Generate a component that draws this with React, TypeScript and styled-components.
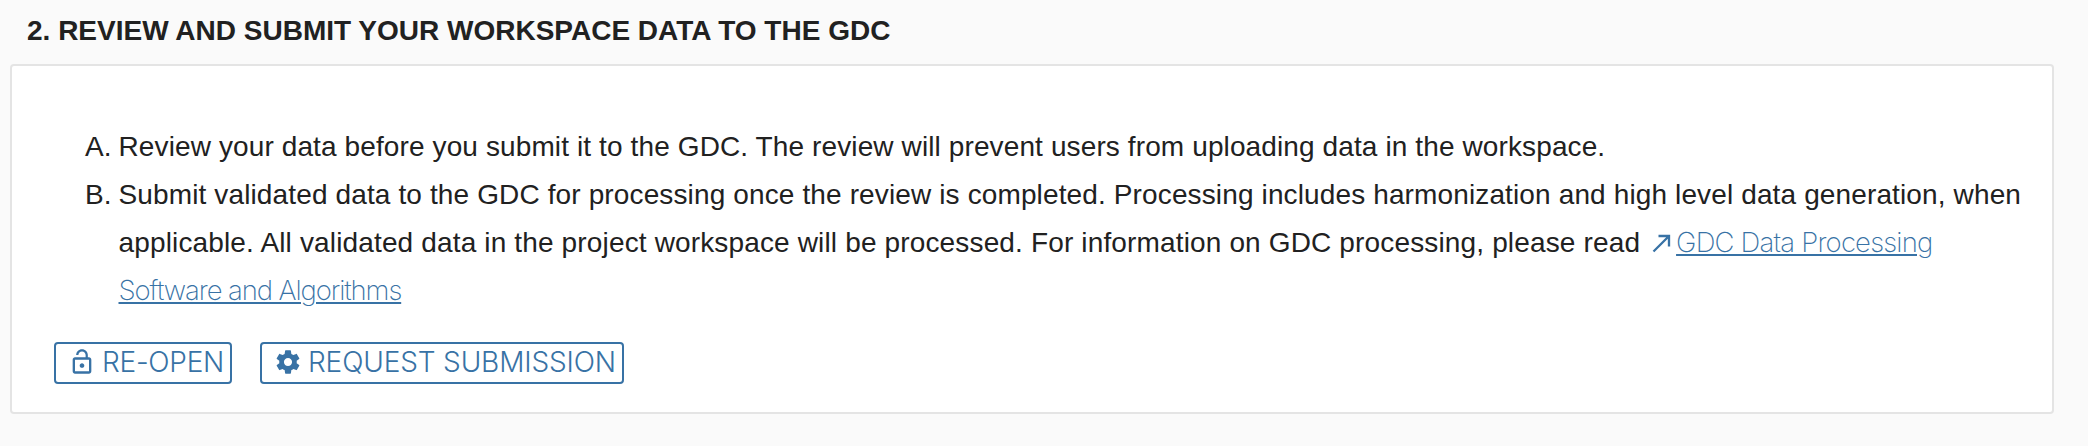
import React from "react";
import styled, { createGlobalStyle } from "styled-components";

const blue = "#3872a5";

const Global = createGlobalStyle`
  * { box-sizing: border-box; }
  body { margin: 0; background: #fafafa; font-family: "Liberation Sans", Arial, sans-serif; color: #212121; }
`;
const Page = styled.main`
  height: 446px;
  padding: 13px 34px 0 10px;
`;
const Heading = styled.h2`
  margin: 0 0 16px 17px;
  font-size: 28px;
  line-height: 35px;
  font-weight: 700;
  white-space: nowrap;
`;
const Panel = styled.section`
  height: 350px;
  background: #fff;
  border: 2px solid #e4e4e4;
  border-radius: 4px;
  padding: 56.5px 0 0 42px;
`;
const Steps = styled.div`
  padding-left: 31px;
  font-size: 28px;
  line-height: 48px;
`;
const Step = styled.div`
  display: grid;
  grid-template-columns: 33.5px 1fr;
`;
const Marker = styled.span<{ $gap: number }>`
  display: block;
  text-align: right;
  padding-right: ${(p) => p.$gap}px;
  white-space: nowrap;
`;
const Line = styled.div<{ $tracking?: number }>`
  height: 48px;
  white-space: nowrap;
  letter-spacing: ${(p) => p.$tracking ?? 0}px;
`;
const Link = styled.a<{ $tracking: number }>`
  color: ${blue};
  font-family: Inter, "Liberation Sans", sans-serif;
  font-size: 27.5px;
  font-weight: 250;
  line-height: 1;
  letter-spacing: ${(p) => p.$tracking}px;
  text-decoration: underline;
  text-decoration-thickness: 2px;
  text-underline-offset: 2px;
`;
const Icon = styled.svg`
  width: 28px;
  height: 28px;
  flex: none;
  fill: ${blue};
`;
const LinkIcon = styled(Icon)`
  vertical-align: -5.5px;
`;
const Actions = styled.div`
  display: flex;
  gap: 28px;
  margin-top: 27.5px;
`;
const Button = styled.button<{ $width: number; $tracking: number }>`
  display: flex;
  align-items: center;
  gap: 6px;
  width: ${(p) => p.$width}px;
  height: 42px;
  padding: 0 0 2px 12px;
  border: 2px solid ${blue};
  border-radius: 4px;
  background: #fff;
  color: ${blue};
  font-family: Inter, "Liberation Sans", sans-serif;
  font-size: 28px;
  font-weight: 300;
  line-height: 34px;
  font-feature-settings: "calt" 0;
  letter-spacing: ${(p) => p.$tracking}px;
  white-space: nowrap;
`;

const LockOpen = () => (
  <Icon viewBox="0 0 24 24" aria-hidden>
    <path d="M12 17c1.1 0 2-.9 2-2s-.9-2-2-2-2 .9-2 2 .9 2 2 2zm6-9h-1V6c0-2.76-2.24-5-5-5S7 3.24 7 6h1.9c0-1.71 1.39-3.1 3.1-3.1 1.71 0 3.1 1.39 3.1 3.1v2H6c-1.1 0-2 .9-2 2v10c0 1.1.9 2 2 2h12c1.1 0 2-.9 2-2V10c0-1.1-.9-2-2-2zm0 12H6V10h12v10z" />
  </Icon>
);
const Gear = () => (
  <Icon viewBox="0 0 24 24" aria-hidden>
    <path d="M19.43 12.98c.04-.32.07-.64.07-.98s-.03-.66-.07-.98l2.11-1.65c.19-.15.24-.42.12-.64l-2-3.46c-.12-.22-.39-.3-.61-.22l-2.49 1c-.52-.4-1.08-.73-1.69-.98l-.38-2.65C14.46 2.18 14.25 2 14 2h-4c-.25 0-.46.18-.49.42l-.38 2.65c-.61.25-1.17.59-1.69.98l-2.49-1c-.23-.09-.49 0-.61.22l-2 3.46c-.13.22-.07.49.12.64l2.11 1.65c-.04.32-.07.65-.07.98s.03.66.07.98l-2.11 1.65c-.19.15-.24.42-.12.64l2 3.46c.12.22.39.3.61.22l2.49-1c.52.4 1.08.73 1.69.98l.38 2.65c.03.24.24.42.49.42h4c.25 0 .46-.18.49-.42l.38-2.65c.61-.25 1.17-.59 1.69-.98l2.49 1c.23.09.49 0 .61-.22l2-3.46c.12-.22.07-.49-.12-.64l-2.11-1.65zM12 15.5c-1.93 0-3.5-1.57-3.5-3.5s1.57-3.5 3.5-3.5 3.5 1.57 3.5 3.5-1.57 3.5-3.5 3.5z" />
  </Icon>
);
const ArrowOut = () => (
  <LinkIcon viewBox="0 0 24 24" aria-hidden>
    <path d="M9 5v2h6.59L4 18.59 5.41 20 17 8.41V15h2V5z" />
  </LinkIcon>
);

export default function App() {
  return (
    <Page>
      <Global />
      <Heading>2. REVIEW AND SUBMIT YOUR WORKSPACE DATA TO THE GDC</Heading>
      <Panel>
        <Steps>
          <Step>
            <Marker $gap={7}>A.</Marker>
            <Line $tracking={0.115}>
              Review your data before you submit it to the GDC. The review will prevent users from uploading data in the workspace.
            </Line>
          </Step>
          <Step>
            <Marker $gap={8.7}>B.</Marker>
            <div>
              <Line $tracking={0.13}>
                Submit validated data to the GDC for processing once the review is completed. Processing includes harmonization and high level data generation, when
              </Line>
              <Line $tracking={0.15}>
                applicable. All validated data in the project workspace will be processed. For information on GDC processing, please read{" "}
                <ArrowOut />
                <Link $tracking={-0.8}>GDC Data Processing</Link>
              </Line>
              <Line>
                <Link $tracking={-1.1}>Software and Algorithms</Link>
              </Line>
            </div>
          </Step>
        </Steps>
        <Actions>
          <Button $width={178} $tracking={-0.25}>
            <LockOpen />
            RE-OPEN
          </Button>
          <Button $width={364} $tracking={-0.15}>
            <Gear />
            REQUEST SUBMISSION
          </Button>
        </Actions>
      </Panel>
    </Page>
  );
}
